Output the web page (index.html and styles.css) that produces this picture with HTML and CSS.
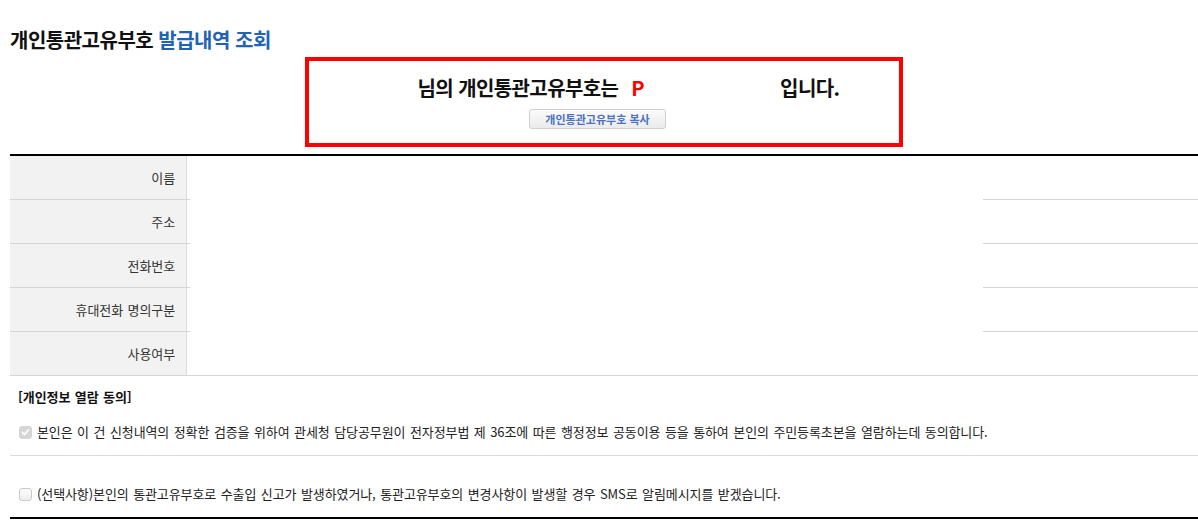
FILE: index.html
```html
<!DOCTYPE html>
<html lang="ko">
<head>
    <meta charset="UTF-8">
    <meta name="viewport" content="width=device-width, initial-scale=1.0">
    <title>개인통관고유부호 발급내역 조회</title>
    <link rel="stylesheet" href="styles.css">
</head>
<body>
    <div class="page">
        <h2 class="page-title">개인통관고유부호 <span class="accent">발급내역 조회</span></h2>

        <div class="result-box">
            <p class="result-text">님의 개인통관고유부호는 <span class="pin">P</span><span class="pin-hidden"></span>입니다.</p>
            <div class="copy-row">
                <button type="button" class="copy-button">개인통관고유부호 복사</button>
            </div>
        </div>

        <div class="info-table">
            <div class="info-row">
                <div class="info-label">이름</div>
                <div class="info-value"></div>
            </div>
            <div class="info-row">
                <div class="info-label">주소</div>
                <div class="info-value"></div>
            </div>
            <div class="info-row">
                <div class="info-label">전화번호</div>
                <div class="info-value"></div>
            </div>
            <div class="info-row">
                <div class="info-label">휴대전화 명의구분</div>
                <div class="info-value"></div>
            </div>
            <div class="info-row">
                <div class="info-label">사용여부</div>
                <div class="info-value"></div>
            </div>
            <div class="info-mask"></div>
        </div>

        <div class="consent">
            <div class="consent-block">
                <p class="consent-title">[개인정보 열람 동의]</p>
                <label class="consent-item">
                    <span class="check checked">
                        <svg width="9" height="8" viewBox="0 0 9 8"><path d="M1 4.2 L3.4 6.5 L8 1.2" fill="none" stroke="#fff" stroke-width="1.6"/></svg>
                    </span>
                    본인은 이 건 신청내역의 정확한 검증을 위하여 관세청 담당공무원이 전자정부법 제 36조에 따른 행정정보 공동이용 등을 통하여 본인의 주민등록초본을 열람하는데 동의합니다.
                </label>
            </div>
            <div class="consent-block last">
                <label class="consent-item">
                    <span class="check"></span>
                    (선택사항)본인의 통관고유부호로 수출입 신고가 발생하였거나, 통관고유부호의 변경사항이 발생할 경우 SMS로 알림메시지를 받겠습니다.
                </label>
            </div>
        </div>
    </div>
</body>
</html>
```

FILE: styles.css
```css
body {
    margin: 0;
    font-family: "Noto Sans CJK KR", sans-serif;
    color: #333;
    background-color: #fff;
}
.page {
    padding-left: 10px;
}
.page-title {
    margin: 0;
    padding-top: 26px;
    font-size: 20px;
    line-height: 28px;
    font-weight: bold;
    letter-spacing: -0.5px;
    color: #111;
}
.page-title .accent {
    color: #1f63b6;
}
.result-box {
    width: 590px;
    margin: 3px auto 0;
    border: 4px solid #ff0000;
    padding: 13px 0 14px;
    text-align: center;
}
.result-text {
    margin: 0;
    padding-left: 49px;
    font-size: 20px;
    line-height: 28px;
    font-weight: bold;
    letter-spacing: -0.6px;
    color: #111;
}
.pin {
    color: #ff0000;
    margin-left: 8px;
}
.pin-hidden {
    display: inline-block;
    width: 136px;
}
.copy-row {
    display: flex;
    justify-content: center;
    margin-top: 7px;
    padding-right: 13px;
}
.copy-button {
    width: 137px;
    height: 20px;
    padding: 0;
    border: 1px solid #cfcfcf;
    border-radius: 3px;
    background: linear-gradient(#fbfbfb, #ebebeb);
    font-family: "Noto Sans CJK KR", sans-serif;
    font-size: 11px;
    line-height: 18px;
    font-weight: bold;
    color: #4b72c0;
}
.info-table {
    position: relative;
    margin-top: 7px;
    border-top: 2px solid #000;
}
.info-row {
    display: flex;
    height: 43px;
    border-bottom: 1px solid #d5d5d5;
}
.info-label {
    width: 165px;
    padding-right: 11px;
    border-right: 1px solid #dcdcdc;
    background-color: #f2f2f2;
    text-align: right;
    font-size: 13px;
    line-height: 43px;
    letter-spacing: -0.1px;
    word-spacing: 1px;
    color: #333;
}
.info-value {
    flex: 1;
}
.info-mask {
    position: absolute;
    left: 180px;
    top: 0;
    width: 793px;
    bottom: 1px;
    background-color: #fff;
}
.consent {
    font-size: 13px;
    letter-spacing: -0.1px;
    word-spacing: 1px;
    color: #222;
}
.consent-block {
    padding: 12px 0 14px 8px;
    border-bottom: 1px solid #dcdcdc;
}
.consent-block.last {
    padding-top: 29px;
    border-bottom: 2px solid #000;
}
.consent-title {
    margin: 0 0 17px;
    line-height: 18px;
    font-weight: bold;
    color: #111;
}
.consent-item {
    display: flex;
    align-items: center;
    line-height: 18px;
}
.check {
    display: inline-flex;
    align-items: center;
    justify-content: center;
    box-sizing: border-box;
    width: 13px;
    height: 13px;
    margin: 0 5px 0 1px;
    border: 1px solid #c9c9c9;
    border-radius: 3px;
    background: linear-gradient(#fdfdfd, #efefef);
}
.check.checked {
    border-color: #d4d4d4;
    background: #d6d6d6;
}
```
